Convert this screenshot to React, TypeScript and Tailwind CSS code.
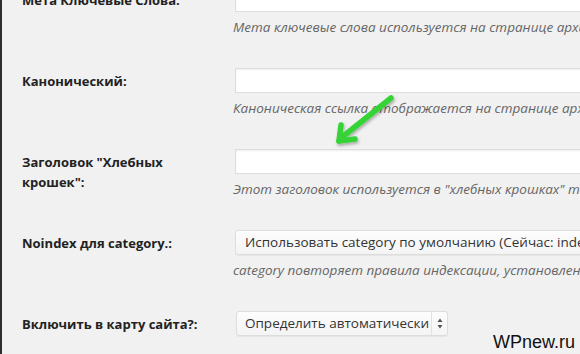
import React from "react";

const font = { fontFamily: '"Open Sans", "Noto Sans", sans-serif' };

function Row({
  label,
  children,
  desc,
}: {
  label: React.ReactNode;
  children: React.ReactNode;
  desc?: string;
}) {
  return (
    <div className="flex h-[81px]">
      <div className="w-[235px] shrink-0 pl-[22px] pt-[3px] text-[13px] leading-[20px] font-bold text-[#222]">
        {label}
      </div>
      <div className="flex min-w-0 flex-1 flex-col">
        {children}
        {desc && (
          <div className="mt-[6px] -ml-[2px] whitespace-nowrap text-[13.5px] italic leading-[18px] text-[#666]">
            {desc}
          </div>
        )}
      </div>
    </div>
  );
}

function TextInput() {
  return (
    <div className="h-[25px] w-[400px] shrink-0 border border-[#dddddd] bg-white shadow-[inset_0_1px_2px_rgba(0,0,0,0.07)]" />
  );
}

export default function App() {
  return (
    <div
      className="relative h-[354px] w-[580px] overflow-hidden border-l-2 border-[#2e2e2e] bg-[#f1f1f1]"
      style={font}
    >
      <div className="-mt-[13px] -ml-[2px] flex flex-col">
        <Row
          label="Мета Ключевые Слова:"
          desc="Мета ключевые слова используется на странице архива category."
        >
          <TextInput />
        </Row>
        <Row
          label="Канонический:"
          desc="Каноническая ссылка отображается на странице архива category."
        >
          <TextInput />
        </Row>
        <Row
          label={
            <>
              Заголовок "Хлебных
              <br />
              крошек":
            </>
          }
          desc='Этот заголовок используется в "хлебных крошках" той страницы.'
        >
          <TextInput />
        </Row>
        <Row
          label="Noindex для category.:"
          desc="category повторяет правила индексации, установленные для сайта."
        >
          <div className="flex h-[25px] w-[420px] shrink-0 items-center whitespace-nowrap rounded-[3px] border border-[#dddddd] bg-gradient-to-b from-[#fdfdfd] to-[#f4f4f4] pl-[9px] text-[13.5px] text-[#333] shadow-[0_1px_1px_rgba(0,0,0,0.05)]">
            Использовать category по умолчанию (Сейчас: index)
          </div>
        </Row>
        <Row label="Включить в карту сайта?:">
          <div className="ml-[1px] flex h-[25px] w-[212px] shrink-0 items-center rounded-[3px] border border-[#dddddd] bg-gradient-to-b from-[#fdfdfd] to-[#f4f4f4] text-[13.5px] text-[#333] shadow-[0_1px_1px_rgba(0,0,0,0.05)]">
            <span className="flex-1 whitespace-nowrap pl-[8px]">Определить автоматически</span>
            <span className="flex h-full w-[16px] items-center justify-center border-l border-[#e2e2e2]">
              <svg width="6" height="11" viewBox="0 0 6 11">
                <path d="M3 0.5 L5.5 4 H0.5 Z" fill="#555" />
                <path d="M3 10.5 L5.5 7 H0.5 Z" fill="#555" />
              </svg>
            </span>
          </div>
        </Row>
      </div>

      <svg
        className="pointer-events-none absolute left-0 top-0"
        width="580"
        height="354"
        viewBox="0 0 580 354"
      >
        <defs>
          <filter id="sh" x="-20%" y="-20%" width="140%" height="140%">
            <feDropShadow dx="1" dy="2" stdDeviation="1.5" floodColor="#000" floodOpacity="0.3" />
          </filter>
        </defs>
        <g filter="url(#sh)" stroke="#35d335" strokeWidth="5.5" strokeLinecap="round" strokeLinejoin="round" fill="none">
          <path d="M389 98 L339 138" />
          <path d="M337 141 L339 125" />
          <path d="M337 141 L353 139" />
        </g>
      </svg>

      <div
        className="absolute bottom-[3px] right-[5px] text-[18px] leading-none text-[#111]"
        style={{ fontFamily: '"Liberation Sans", Arial, sans-serif' }}
      >
        WPnew.ru
      </div>
    </div>
  );
}
